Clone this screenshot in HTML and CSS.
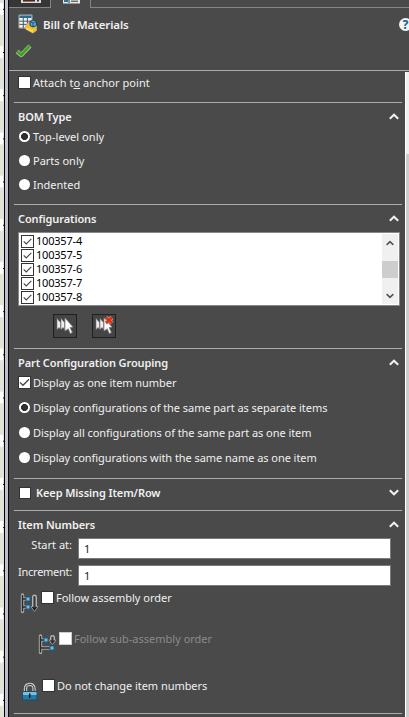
FILE: index.html
```
<!DOCTYPE html>
<html lang="en">
<head>
    <meta charset="UTF-8">
    <meta name="viewport" content="width=device-width, initial-scale=1.0">
    <title>Bill of Materials</title>
    <link rel="stylesheet" href="styles.css">
</head>
<body>

    <!-- Shared shapes -->
    <svg class="defs" width="0" height="0">
        <symbol id="up" viewBox="0 0 10 7"><path d="M0.8 5.7 L5 1.8 L9.2 5.7" fill="none" stroke="currentColor" stroke-width="2.1"/></symbol>
        <symbol id="down" viewBox="0 0 10 7"><path d="M0.8 1.3 L5 5.2 L9.2 1.3" fill="none" stroke="currentColor" stroke-width="2.1"/></symbol>
        <symbol id="tick" viewBox="0 0 13 13"><path d="M2 6.4 L5 9.3 L11 3.3" fill="none" stroke="#444" stroke-width="1.3"/></symbol>
        <symbol id="cursors" viewBox="0 0 24 24">
            <path d="M4 4.5 L7.5 8.5 V15 L6 13.5 L4 15.5 Z M8 4.5 L11.5 8.5 V15 L10 13.5 L8 15.5 Z" fill="#eee" stroke="#777" stroke-width=".6"/>
            <path d="M12 4 L20 13 L17 13.5 L19.3 18.5 L17.3 19.5 L15.3 14.7 L12 17 Z" fill="#fff" stroke="#888" stroke-width=".8"/>
        </symbol>
    </svg>

    <div class="window">
        <div class="sheet"></div>

        <div class="panel">
            <div class="tabs">
                <div class="tab">
                    <svg width="20" height="4" viewBox="0 0 20 4"><path d="M0 0H20V3H0Z" fill="#ddd"/><path d="M2 0H14V1.6H2Z" fill="#502918"/><path d="M16 0H18V1.6H16Z" fill="#333"/></svg>
                </div>
                <div class="tab active">
                    <svg width="17" height="4" viewBox="0 0 17 4"><path d="M0 0H17V3.5H0Z" fill="#e8e8e8"/><path d="M1 0H5V2H1Z" fill="#2875a5"/><path d="M6 0V3" stroke="#333"/><path d="M8 1.2H15" stroke="#333"/></svg>
                </div>
                <div class="tab-space"></div>
            </div>

            <div class="title">
                <svg class="bom-icon" width="20" height="20" viewBox="0 0 20 20">
                    <path d="M1 1H14V14H1Z" fill="#eee" stroke="#aaa"/>
                    <path d="M1.5 1.5H13.5V4H1.5Z" fill="#286c94"/>
                    <path d="M1.5 7.2H13.5M1.5 10.4H13.5M5.3 4V14M9.4 4V14" stroke="#4c5965" stroke-width="1"/>
                    <path d="M8 11 L11 8.5 L14 11 L18.5 9.5 V16.5 L15 19 L7.5 15 Z" fill="#f4bd2b" stroke="#b5a891" stroke-width=".9"/>
                    <path d="M8 13 L15 16 V19 L8 15Z" fill="#ffd84a"/>
                    <path d="M12 7.5 L15.5 6 L18.5 7.5 V11.5 L15 13 L12 11.5Z" fill="#55a9d8" stroke="#173f5a"/>
                    <path d="M12 7.5 L15 9 L18.5 7.5 M15 9V13" fill="none" stroke="#173f5a" stroke-width=".8"/>
                </svg>
                <h1>Bill of Materials</h1>
                <span class="help">?</span>
            </div>

            <div class="confirm">
                <svg width="18" height="16" viewBox="0 0 18 16">
                    <path d="M2 8.5 L6.3 12 L15 3" fill="none" stroke="#a6b39f" stroke-width="4.3" stroke-linejoin="round"/>
                    <path d="M2.3 8.5 L6.3 11.8 L14.5 3.2" fill="none" stroke="#35a80b" stroke-width="2.5"/>
                </svg>
            </div>

            <div class="body">
                <div class="sections">
                    <section class="attach">
                        <div class="row"><i class="check"></i><span class="wide">Attach t<u>o</u> anchor point</span></div>
                    </section>

                    <section class="bom-type">
                        <div class="head"><h2>BOM Type</h2><svg width="10" height="7"><use href="#up"/></svg></div>
                        <div class="row"><i class="radio on"></i><span class="wide">Top-level only</span></div>
                        <div class="row"><i class="radio"></i><span>Parts only</span></div>
                        <div class="row"><i class="radio"></i><span>Indented</span></div>
                    </section>

                    <section class="configs">
                        <div class="head"><h2>Configurations</h2><svg width="10" height="7"><use href="#up"/></svg></div>
                        <div class="list">
                            <div class="items">
                                <div class="item"><svg width="13" height="13"><use href="#tick"/></svg>100357-4</div>
                                <div class="item"><svg width="13" height="13"><use href="#tick"/></svg>100357-5</div>
                                <div class="item"><svg width="13" height="13"><use href="#tick"/></svg>100357-6</div>
                                <div class="item"><svg width="13" height="13"><use href="#tick"/></svg>100357-7</div>
                                <div class="item"><svg width="13" height="13"><use href="#tick"/></svg>100357-8</div>
                            </div>
                            <div class="list-scroll">
                                <svg width="8" height="6" viewBox="0 0 10 7"><use href="#up"/></svg>
                                <div class="list-thumb"></div>
                                <svg width="8" height="6" viewBox="0 0 10 7"><use href="#down"/></svg>
                            </div>
                        </div>
                        <div class="buttons">
                            <div class="button"><svg width="24" height="24"><use href="#cursors"/></svg></div>
                            <div class="button"><svg width="24" height="24"><use href="#cursors"/><path d="M14 3.5 L20 9 M20 3.5 L14 9" stroke="#aaa" stroke-width="4"/><path d="M14 3.5 L20 9 M20 3.5 L14 9" stroke="#e52b0c" stroke-width="2.4"/></svg></div>
                        </div>
                    </section>

                    <section class="grouping">
                        <div class="head"><h2>Part Configuration Grouping</h2><svg width="10" height="7"><use href="#up"/></svg></div>
                        <div class="row"><i class="check"><svg width="13" height="13"><use href="#tick"/></svg></i><span class="tight">Display as one item number</span></div>
                        <div class="row"><i class="radio on"></i><span class="tight">Display configurations of the same part as separate items</span></div>
                        <div class="row"><i class="radio"></i><span class="tight">Display all configurations of the same part as one item</span></div>
                        <div class="row"><i class="radio"></i><span class="tight">Display configurations with the same name as one item</span></div>
                    </section>

                    <section class="missing">
                        <div class="head"><i class="check"></i><h2>Keep Missing Item/Row</h2><svg width="10" height="7"><use href="#down"/></svg></div>
                    </section>

                    <section class="numbers">
                        <div class="head"><h2>Item Numbers</h2><svg width="10" height="7"><use href="#up"/></svg></div>
                        <div class="field"><label>Start at:</label><div class="input">1</div></div>
                        <div class="field"><label class="increment">Increment:</label><div class="input">1</div></div>
                        <div class="option">
                            <svg width="20" height="21" viewBox="0 0 20 21">
                                <path d="M2.5 2V18.5M2.5 6H6M2.5 14H6" stroke="#aaa" stroke-width="3.4" stroke-linecap="round"/>
                                <path d="M2.5 2V18.5M2.5 6H6M2.5 14H6" stroke="#292929" stroke-width="1.4"/>
                                <path d="M14.5 4V14" stroke="#b5b5b5" stroke-width="5" stroke-linecap="round"/>
                                <path d="M11 13.5H18L14.5 18.5Z" fill="#1c1c1c" stroke="#aaa" stroke-width=".8"/>
                                <path d="M14.5 4V14" stroke="#3a3a3a" stroke-width="2.2" stroke-linecap="round"/>
                                <path d="M6 4H10V8H6ZM6 12H10V16H6Z" fill="#70bce3" stroke="#155c83"/>
                            </svg>
                            <i class="check"></i><span>Follow assembly order</span>
                        </div>
                        <div class="option sub">
                            <svg width="20" height="21" viewBox="0 0 20 21">
                                <path d="M2.5 2V18.5M2.5 6H6M2.5 14H12" stroke="#aaa" stroke-width="3.4" stroke-linecap="round"/>
                                <path d="M2.5 2V18.5M2.5 6H6M2.5 14H12" stroke="#292929" stroke-width="1.4"/>
                                <path d="M14.5 3.5V7" stroke="#b5b5b5" stroke-width="5" stroke-linecap="round"/>
                                <path d="M11 6H18L14.5 10.5Z" fill="#1c1c1c" stroke="#aaa" stroke-width=".8"/>
                                <path d="M14.5 3.5V7" stroke="#3a3a3a" stroke-width="2.2" stroke-linecap="round"/>
                                <path d="M6 4H10V8H6ZM12 12H16V16H12Z" fill="#70bce3" stroke="#155c83"/>
                            </svg>
                            <i class="check"></i><span>Follow sub-assembly order</span>
                        </div>
                        <div class="option lock">
                            <svg width="18" height="20" viewBox="0 0 18 20">
                                <path d="M4.5 11V7.5C4.5 2 13 2 13 7.5V11" fill="none" stroke="#c5c5c5" stroke-width="3.4"/>
                                <path d="M4.5 11V7.5C4.5 2 13 2 13 7.5V11" fill="none" stroke="#333" stroke-width="1"/>
                                <path d="M1.5 10.5H16V19H1.5Z" fill="#2679a5" stroke="#164c6c"/>
                                <path d="M2 11H15.5V14H2Z" fill="#78bfdf"/>
                                <path d="M8.7 12.5V17" stroke="#111" stroke-width="1.5"/>
                            </svg>
                            <i class="check"></i><span class="tight">Do not change item numbers</span>
                        </div>
                    </section>
                </div>
                <div class="panel-scroll"><div class="panel-thumb"></div></div>
            </div>
        </div>
    </div>

</body>
</html>
```
FILE: styles.css
```
* {
    box-sizing: border-box;
}

body {
    margin: 0;
    font-family: "Noto Sans", "Open Sans", sans-serif;
    font-size: 11px;
    color: #f0f0f0;
    overflow: hidden;
}

svg {
    display: block;
    flex-shrink: 0;
}

.defs {
    position: absolute;
}

.window {
    display: flex;
    width: 409px;
    height: 717px;
    overflow: hidden;
}

/* Strip of the drawing sheet left of the panel */
.sheet {
    width: 9px;
    flex-shrink: 0;
    border-right: 1px solid #080808;
    background:
        linear-gradient(90deg, transparent 4px, #000 4px, #000 5px, #bfc0cb 5px),
        linear-gradient(transparent 9px, #111 9px, #111 10px, transparent 10px) 3px 0 / 1px 43.2px repeat-y,
        linear-gradient(#e2e4da 3px, #fff 3px, #fff 15px, #e2e4da 15px) 0 0 / 3px 43.2px repeat-y,
        #e2e4da;
}

.panel {
    display: flex;
    flex-direction: column;
    width: 400px;
    background: #4a4a4a;
}

.tabs {
    display: flex;
    height: 8px;
}

.tab {
    width: 42px;
    padding-left: 12px;
    background: #363636;
    border-right: 1px solid #858585;
    border-bottom: 1px solid #858585;
}

.tab.active {
    width: 40px;
    background: #4a4a4a;
    border-bottom: none;
}

.tab-space {
    flex: 1;
    border-bottom: 1px solid #858585;
}

.title {
    display: flex;
    align-items: center;
    height: 32px;
    padding-left: 9px;
}

h1, h2 {
    margin: 0;
    font-size: 11px;
    font-weight: 600;
    line-height: 16px;
    letter-spacing: -0.1px;
    white-space: nowrap;
}

h1 {
    flex: 1;
    margin: 2px 0 0 5px;
    font-size: 11.5px;
}

.help {
    width: 13px;
    height: 13px;
    margin-right: -3px;
    flex-shrink: 0;
    border-radius: 50%;
    background: #f4f4f4;
    color: #1c7095;
    font-size: 12px;
    font-weight: 800;
    line-height: 13px;
    text-align: center;
}

.confirm {
    height: 31px;
    padding: 3px 0 0 6px;
    border-bottom: 1px solid #ababab;
}

.body {
    display: flex;
    height: 646px;
}

.sections {
    width: 388px;
    margin-left: 5px;
}

section {
    padding: 6px 0 0 4px;
    border-bottom: 1px solid #ababab;
}

.head {
    display: flex;
    align-items: center;
    justify-content: space-between;
    height: 16px;
    padding-right: 3px;
}

.head > svg {
    margin-top: -2px;
}

.row {
    display: flex;
    align-items: center;
    height: 24px;
    padding-bottom: 1px;
    white-space: nowrap;
}

.row span {
    margin: -1px 0 0 2px;
}

.tight {
    letter-spacing: -0.05px;
}

.wide {
    letter-spacing: 0.05px;
}

.check {
    width: 13px;
    height: 13px;
    flex-shrink: 0;
    background: #fff;
    border: 1px solid #333;
}

.check svg {
    margin: -1px;
}

.radio {
    width: 11px;
    height: 11px;
    margin: 0 1px;
    flex-shrink: 0;
    border-radius: 50%;
    background: #fff;
}

.radio.on {
    background: radial-gradient(circle, #2e2e2e 3.2px, #fff 3.8px);
}

.attach {
    height: 32px;
    padding-top: 0;
}

.bom-type {
    height: 102px;
}

.configs {
    height: 144px;
}

.grouping {
    height: 130px;
}

.grouping .row {
    height: 25px;
    padding-bottom: 2px;
}

.missing {
    height: 32px;
}

.missing .check {
    width: 12px;
    height: 12px;
    margin: -1px 0 0 1px;
}

.missing h2 {
    flex: 1;
    margin-left: 5px;
}

.numbers {
    height: 203px;
}

.list {
    display: flex;
    width: 382px;
    height: 74px;
    margin-top: 5px;
    border: 1px solid #828790;
    background: #fff;
    color: #000;
}

.items {
    flex: 1;
    padding: 1px 0 0 2px;
}

.item {
    display: flex;
    gap: 2px;
    height: 14px;
    line-height: 13px;
    letter-spacing: -0.2px;
}

.item svg {
    margin-top: 1px;
    border: 1px solid #333;
}

.list-scroll {
    display: flex;
    flex-direction: column;
    align-items: center;
    justify-content: space-between;
    width: 16px;
    margin: 1px 1px 1px 0;
    padding: 6px 0 5px;
    background: #f0f0f0;
    color: #555;
}

.list-thumb {
    width: 16px;
    height: 17px;
    background: #cdcdcd;
}

.buttons {
    display: flex;
    gap: 15px;
    padding: 8px 0 0 35px;
}

.button {
    width: 24px;
    height: 24px;
    border: 1px solid #202020;
    background: #444;
}

.button svg {
    margin: -1px;
}

.field {
    display: flex;
    height: 21px;
    margin-top: 5px;
}

.field + .field {
    margin-top: 6px;
}

.field label {
    width: 54px;
    margin-right: 6px;
    line-height: 14px;
    text-align: right;
    white-space: nowrap;
}

.field .increment {
    letter-spacing: -0.25px;
}

.input {
    width: 313px;
    padding-left: 5px;
    border: 1px solid #7a7a7a;
    background: #fff;
    color: #222;
    line-height: 19px;
}

.option {
    display: flex;
    height: 41px;
    padding-left: 2px;
    margin-top: 5px;
    line-height: 13px;
    white-space: nowrap;
}

.option svg {
    margin: 2px 1px 0 0;
}

.option span {
    margin-left: 2px;
}

.option.sub {
    height: 42px;
    margin-top: 0;
    padding-left: 20px;
    color: #8b8b8b;
}

.option.sub .check {
    border-color: #ccc;
}

.option.lock {
    margin-top: 5px;
    padding-left: 3px;
}

.option.lock svg {
    margin-right: 3px;
}

.panel-scroll {
    width: 4px;
    margin: 1px 0 0 3px;
    background: #f0f0f0;
    border-left: 1px solid #fff;
}

.panel-thumb {
    height: 563px;
    margin-top: 82px;
    background: #cdcdcd;
}
```
